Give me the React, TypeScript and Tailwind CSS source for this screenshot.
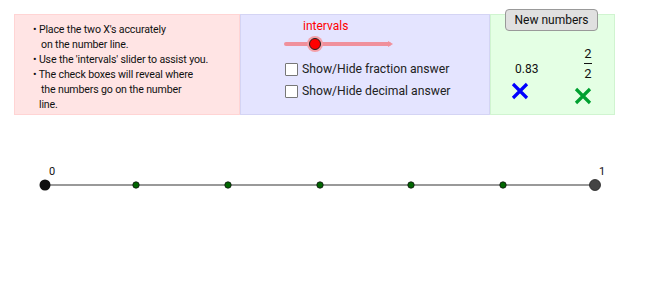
import React from "react";

export default function App() {
  const ticks = [136, 228, 320, 411, 503];
  return (
    <div className="w-[650px] h-[304px] bg-white overflow-hidden relative" style={{ fontFamily: "Roboto, 'Liberation Sans', sans-serif" }}>
      <div className="flex pt-[14px] pl-[14px]">
        <div className="w-[226px] h-[101px] bg-[#ffe4e4] border border-[#ffd4d4] pl-[18px] pt-[7px] text-[10.6px] leading-[15px] text-[#111] tracking-[-0.15px]">
          <div>• Place the two X's accurately</div>
          <div className="pl-[8px]">on the number line.</div>
          <div>• Use the 'intervals' slider to assist you.</div>
          <div>• The check boxes will reveal where</div>
          <div className="pl-[8px]">the numbers go on the number</div>
          <div className="pl-[6px]">line.</div>
        </div>
        <div className="w-[250px] h-[101px] bg-[#e4e4ff] border border-[#d4d4f4] relative">
          <div className="absolute left-[62px] top-[2px] text-[12px] text-[#ff0000]">intervals</div>
          <svg className="absolute left-[42px] top-[20px]" width="112" height="18" viewBox="0 0 112 18">
            <line x1="3" y1="9" x2="106" y2="9" stroke="#f0909c" strokeWidth="4" strokeLinecap="round" />
            <polygon points="105,6 110,9 105,12" fill="#f0909c" />
            <circle cx="32" cy="9" r="8" fill="#f4a0a8" />
            <circle cx="32" cy="9" r="5.5" fill="#ff0000" stroke="#222" strokeWidth="1" />
          </svg>
          <div className="absolute left-[44px] top-[47px] flex flex-col gap-[8px] text-[12.2px] text-[#222]">
            <label className="flex items-center gap-[4px] h-[14px]">
              <span className="w-[13px] h-[13px] border border-[#777] bg-white rounded-[1px]" />
              <span>Show/Hide fraction answer</span>
            </label>
            <label className="flex items-center gap-[4px] h-[14px]">
              <span className="w-[13px] h-[13px] border border-[#777] bg-white rounded-[1px]" />
              <span>Show/Hide decimal answer</span>
            </label>
          </div>
        </div>
        <div className="w-[125px] h-[101px] bg-[#e4ffe4] border border-[#d0f4d0] relative">
          <div className="absolute left-[24px] top-[45px] text-[12px] text-[#111]">0.83</div>
          <svg className="absolute left-[20px] top-[67px]" width="18" height="18" viewBox="0 0 18 18">
            <path d="M2 2 L16 16 M16 2 L2 16" stroke="#0000ff" strokeWidth="3.2" />
          </svg>
          <div className="absolute left-[93px] top-[31px] flex flex-col items-center text-[13px] leading-[15px] text-[#111]">
            <span>2</span>
            <span className="w-[8px] h-[1px] bg-[#111] my-[2px]" />
            <span>2</span>
          </div>
          <svg className="absolute left-[83px] top-[72px]" width="18" height="18" viewBox="0 0 18 18">
            <path d="M2 2 L16 16 M16 2 L2 16" stroke="#00a030" strokeWidth="3.2" />
          </svg>
        </div>
      </div>
      <button className="absolute left-[505px] top-[9px] w-[93px] h-[22px] bg-[#e0e0e0] border border-[#999] rounded-[4px] text-[12px] text-[#111]">
        New numbers
      </button>
      <svg className="block mt-[45px]" width="650" height="40" viewBox="0 160 650 40">
        <line x1="45" y1="185" x2="595" y2="185" stroke="#777" strokeWidth="1.5" />
        {ticks.map((x) => (
          <circle key={x} cx={x} cy="185" r="3.2" fill="#006600" stroke="#111" strokeWidth="0.8" />
        ))}
        <circle cx="45" cy="185" r="5.5" fill="#111" />
        <circle cx="595" cy="185" r="5.5" fill="#444" stroke="#222" strokeWidth="0.8" />
        <text x="49" y="175" fontSize="11" fill="#111" fontFamily="Roboto, sans-serif">0</text>
        <text x="599" y="175" fontSize="11" fill="#111" fontFamily="Roboto, sans-serif">1</text>
      </svg>
    </div>
  );
}
